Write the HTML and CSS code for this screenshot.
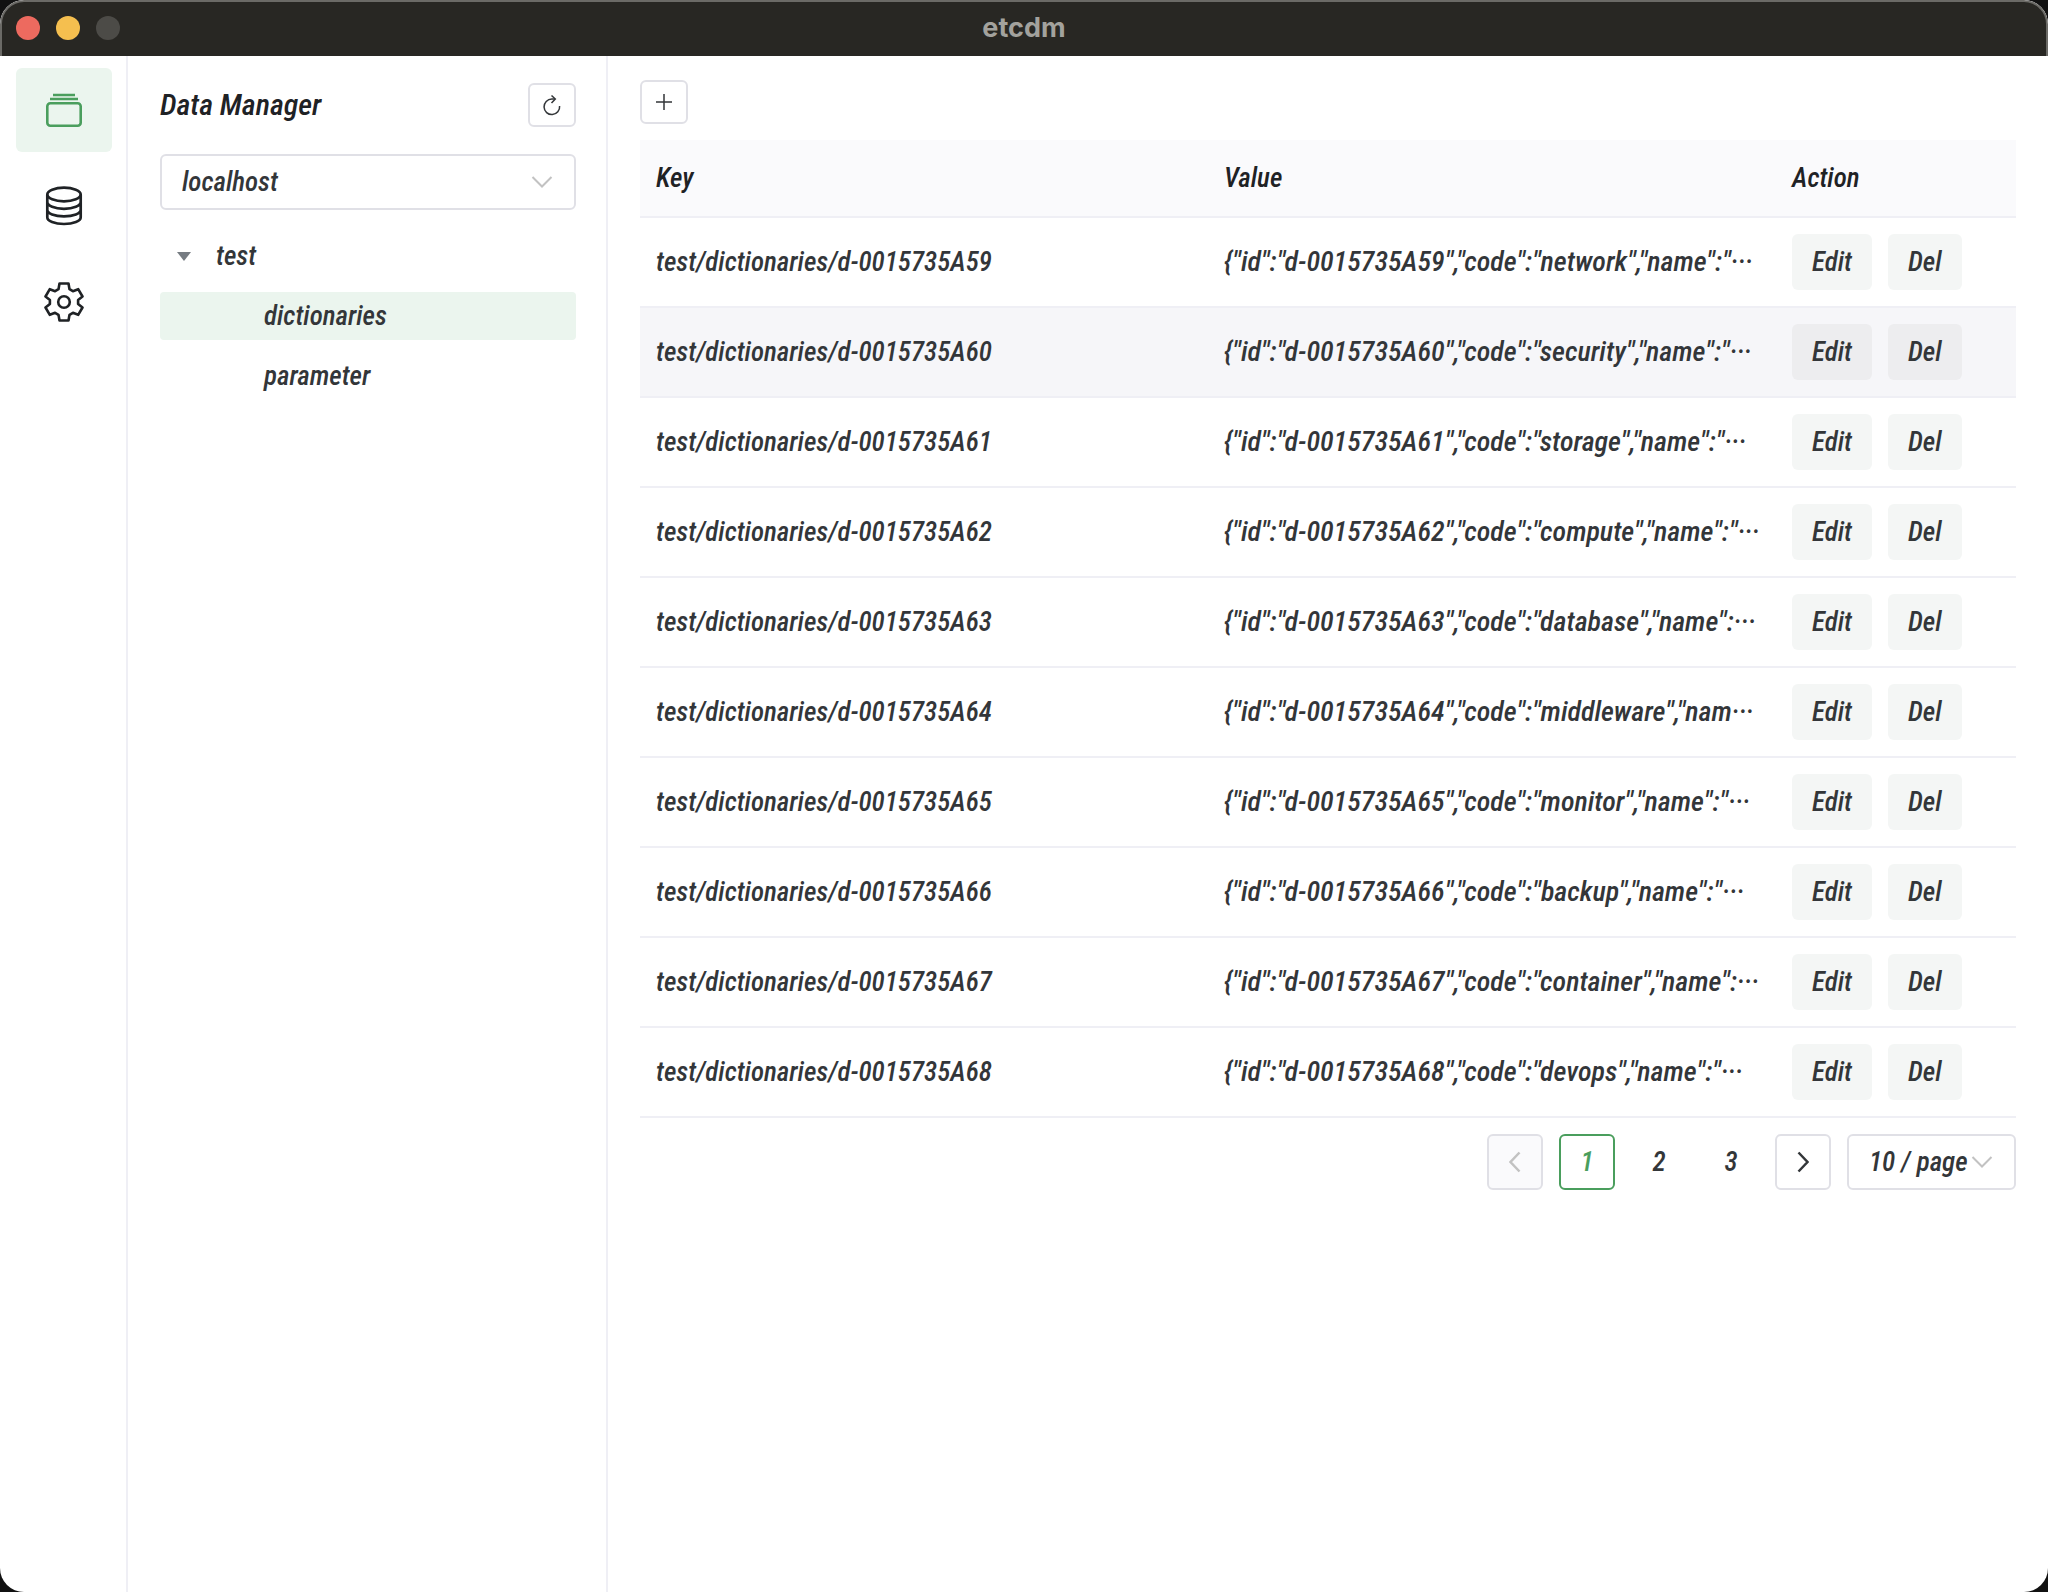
FILE: index.html
```html
<!DOCTYPE html>
<html lang="en">
<head>
<meta charset="utf-8">
<title>etcdm</title>
<link rel="stylesheet" href="styles.css">
</head>
<body>
<div class="window">
  <header class="titlebar">
    <div class="lights">
      <span class="light light-close"></span>
      <span class="light light-min"></span>
      <span class="light light-max"></span>
    </div>
    <span class="app-name">etcdm</span>
  </header>
  <div class="layout">
    <nav class="sidebar" aria-label="Sections">
      <button class="nav-item nav-active" type="button" aria-label="Data">
        <svg width="40" height="40" viewBox="0 0 40 40" fill="none" stroke="currentColor" stroke-width="2.600">
          <path d="M9 5h22M6 9h28" stroke-width="2.500"/>
          <rect x="3.300" y="13.300" width="33.400" height="22.400" rx="3"/>
        </svg>
      </button>
      <button class="nav-item" type="button" aria-label="Connections">
        <svg width="40" height="40" viewBox="0 0 40 40" fill="none" stroke="currentColor" stroke-width="2.700">
          <ellipse cx="20" cy="8.500" rx="16.700" ry="6.800"/>
          <path d="M3.300 8.500V31.500C3.300 35 10.500 38 20 38S36.700 35 36.700 31.500V8.500M3.300 16C3.300 19.800 10.500 22.800 20 22.800S36.700 19.800 36.700 16M3.300 23.700C3.300 27.500 10.500 30.400 20 30.400S36.700 27.500 36.700 23.700"/>
        </svg>
      </button>
      <button class="nav-item" type="button" aria-label="Settings">
        <svg width="40" height="40" viewBox="0 0 40 40" fill="none" stroke="currentColor" stroke-width="2.600" stroke-linejoin="round">
          <circle cx="20" cy="20" r="5.800"/>
          <path d="M15.500 1.500h9l1 5.700 3.400 2 5.300-2L38.500 14.500 34.100 18v4l4.400 3.500-4.300 7.300-5.300-2-3.400 2-1 5.700h-9l-1-5.700-3.400-2-5.300 2L1.500 25.500 5.900 22v-4L1.500 14.500 5.800 7.200l5.300 2 3.400-2z"/>
        </svg>
      </button>
    </nav>
    <aside class="panel">
      <div class="panel-head">
        <h1 class="panel-title">Data Manager</h1>
        <button class="icon-button" type="button" aria-label="Refresh">
          <svg width="20" height="22" viewBox="0 0 20 22" fill="none" stroke="currentColor" stroke-width="1.500">
            <path d="M17.600 12A7.800 7.800 0 1 1 9.800 5H13"/>
            <path d="M9.500 1.500 13.300 5 9.500 9"/>
          </svg>
        </button>
      </div>
      <div class="select">
        <select class="select-field" aria-label="Connection"><option>localhost</option></select>
        <svg class="select-arrow" width="22" height="12" viewBox="0 0 22 12" fill="none" stroke="currentColor" stroke-width="2"><path d="M1.500 1 11 10.500 20.500 1"/></svg>
      </div>
      <ul class="tree">
        <li><button class="node" type="button"><span class="caret"></span>test</button></li>
        <li><button class="node node-child node-selected" type="button">dictionaries</button></li>
        <li><button class="node node-child" type="button">parameter</button></li>
      </ul>
    </aside>
    <main class="content">
      <button class="icon-button" type="button" aria-label="Add">
        <svg width="16" height="16" viewBox="0 0 16 16" stroke="currentColor" stroke-width="1.500"><path d="M8 0v16M0 8h16"/></svg>
      </button>
      <table class="table">
        <colgroup><col><col><col class="col-action"></colgroup>
        <thead>
          <tr><th>Key</th><th>Value</th><th>Action</th></tr>
        </thead>
        <tbody>
          <tr><td>test/dictionaries/d-0015735A59</td><td class="value">{"id":"d-0015735A59","code":"network","name":"···</td><td><div class="actions"><button class="action" type="button">Edit</button><button class="action" type="button">Del</button></div></td></tr>
          <tr class="row-hover"><td>test/dictionaries/d-0015735A60</td><td class="value">{"id":"d-0015735A60","code":"security","name":"···</td><td><div class="actions"><button class="action" type="button">Edit</button><button class="action" type="button">Del</button></div></td></tr>
          <tr><td>test/dictionaries/d-0015735A61</td><td class="value">{"id":"d-0015735A61","code":"storage","name":"···</td><td><div class="actions"><button class="action" type="button">Edit</button><button class="action" type="button">Del</button></div></td></tr>
          <tr><td>test/dictionaries/d-0015735A62</td><td class="value">{"id":"d-0015735A62","code":"compute","name":"···</td><td><div class="actions"><button class="action" type="button">Edit</button><button class="action" type="button">Del</button></div></td></tr>
          <tr><td>test/dictionaries/d-0015735A63</td><td class="value">{"id":"d-0015735A63","code":"database","name":···</td><td><div class="actions"><button class="action" type="button">Edit</button><button class="action" type="button">Del</button></div></td></tr>
          <tr><td>test/dictionaries/d-0015735A64</td><td class="value">{"id":"d-0015735A64","code":"middleware","nam···</td><td><div class="actions"><button class="action" type="button">Edit</button><button class="action" type="button">Del</button></div></td></tr>
          <tr><td>test/dictionaries/d-0015735A65</td><td class="value">{"id":"d-0015735A65","code":"monitor","name":"···</td><td><div class="actions"><button class="action" type="button">Edit</button><button class="action" type="button">Del</button></div></td></tr>
          <tr><td>test/dictionaries/d-0015735A66</td><td class="value">{"id":"d-0015735A66","code":"backup","name":"···</td><td><div class="actions"><button class="action" type="button">Edit</button><button class="action" type="button">Del</button></div></td></tr>
          <tr><td>test/dictionaries/d-0015735A67</td><td class="value">{"id":"d-0015735A67","code":"container","name":···</td><td><div class="actions"><button class="action" type="button">Edit</button><button class="action" type="button">Del</button></div></td></tr>
          <tr><td>test/dictionaries/d-0015735A68</td><td class="value">{"id":"d-0015735A68","code":"devops","name":"···</td><td><div class="actions"><button class="action" type="button">Edit</button><button class="action" type="button">Del</button></div></td></tr>
        </tbody>
      </table>
      <nav class="pager" aria-label="Pages">
        <button class="page page-boxed page-off" type="button" disabled aria-label="Previous page">
          <svg width="12" height="22" viewBox="0 0 12 22" fill="none" stroke="currentColor" stroke-width="2.500"><path d="M10.500 1.500 1.500 11l9 9.500"/></svg>
        </button>
        <button class="page page-boxed page-current" type="button">1</button>
        <button class="page" type="button">2</button>
        <button class="page" type="button">3</button>
        <button class="page page-boxed" type="button" aria-label="Next page">
          <svg width="12" height="22" viewBox="0 0 12 22" fill="none" stroke="currentColor" stroke-width="2.500"><path d="M1.500 1.500l9 9.500-9 9.500"/></svg>
        </button>
        <div class="select page-size">
          <select class="select-field" aria-label="Rows per page"><option>10 / page</option></select>
          <svg class="select-arrow" width="22" height="12" viewBox="0 0 22 12" fill="none" stroke="currentColor" stroke-width="2"><path d="M1.500 1 11 10.500 20.500 1"/></svg>
        </div>
      </nav>
    </main>
  </div>
</div>
</body>
</html>
```
FILE: styles.css
```css
* { box-sizing: border-box; }

body {
  margin: 0;
  background: #111;
  color: #333639;
  font: italic 500 27px/36px "Roboto Condensed", "Open Sans", sans-serif;
}

button, select {
  margin: 0;
  padding: 0;
  border: 0;
  background: none;
  color: inherit;
  font: inherit;
}

.window {
  display: flex;
  flex-direction: column;
  min-height: 100vh;
  overflow: hidden;
  border-radius: 24px;
  background: #fff;
}

.titlebar {
  display: grid;
  grid-template-columns: 1fr auto 1fr;
  align-items: center;
  height: 56px;
  padding: 0 14px 2px;
  border: 2px solid #6b6a66;
  border-bottom: 0;
  border-radius: 24px 24px 0 0;
  background: #282723;
}

.lights { display: flex; gap: 16px; }
.light { width: 24px; height: 24px; border-radius: 50%; }
.light-close { background: #ed6a5f; }
.light-min { background: #f5bf4f; }
.light-max { background: #4c4b47; }

.app-name {
  color: #a3a29d;
  font: normal 700 27px/32px Inter, sans-serif;
}

.layout { display: flex; flex: 1; }

.sidebar {
  display: flex;
  flex-direction: column;
  gap: 12px;
  width: 128px;
  padding: 12px 14px 12px 16px;
  border-right: 2px solid #efeff5;
}

.nav-item {
  display: flex;
  align-items: center;
  justify-content: center;
  width: 96px;
  height: 84px;
  border-radius: 6px;
  color: #1f2225;
}
.nav-active { background: #ebf5ee; color: #4a9e5d; }

.panel {
  width: 480px;
  padding: 27px 30px 24px 32px;
  border-right: 2px solid #efeff5;
}

.panel-head {
  display: flex;
  align-items: center;
  justify-content: space-between;
  margin-bottom: 27px;
}
.panel-title {
  margin: 0;
  color: #1f2225;
  font-size: 30px;
  font-weight: 500;
  line-height: 44px;
}

.icon-button {
  display: flex;
  align-items: center;
  justify-content: center;
  width: 48px;
  height: 44px;
  border: 2px solid #e0e0e6;
  border-radius: 6px;
}

.select { position: relative; }
.select-field {
  display: block;
  width: 100%;
  height: 56px;
  padding: 0 20px;
  border: 2px solid #e0e0e6;
  border-radius: 6px;
  background: #fff;
  appearance: none;
}
.select-arrow {
  position: absolute;
  top: 22px;
  right: 23px;
  color: #c2c2c2;
  pointer-events: none;
}

.tree {
  display: flex;
  flex-direction: column;
  gap: 12px;
  margin: 22px 0 0;
  padding: 0;
  list-style: none;
}
.node {
  display: flex;
  align-items: center;
  gap: 25px;
  width: 100%;
  height: 48px;
  padding: 0 17px;
  border-radius: 4px;
}
.node-child { padding-left: 104px; }
.node-selected { background: #ebf5ee; }
.caret {
  border: 7px solid transparent;
  border-top: 9px solid #767c82;
  border-bottom: 0;
}

.content { flex: 1; padding: 24px 32px; }

.table {
  width: 100%;
  margin-top: 16px;
  border-collapse: separate;
  border-spacing: 0;
  table-layout: fixed;
}
.col-action { width: 240px; }
.table th, .table td {
  padding: 0 16px;
  border-bottom: 2px solid #efeff5;
  text-align: left;
  white-space: nowrap;
}
.table th {
  height: 78px;
  background: #fafafc;
  color: #1f2225;
  font-weight: 500;
}
.table td { height: 90px; }
.table .value { font-size: 28px; }
.row-hover { background: #f6f6f9; }

.actions { display: flex; gap: 16px; }
.action {
  height: 56px;
  padding: 0 20px;
  border-radius: 6px;
  background: #f4f6f5;
}
.row-hover .action { background: #ededef; }

.pager {
  display: flex;
  justify-content: flex-end;
  gap: 16px;
  margin-top: 16px;
}
.page {
  display: flex;
  align-items: center;
  justify-content: center;
  width: 56px;
  height: 56px;
  border-radius: 6px;
}
.page-boxed { border: 2px solid #e0e0e6; }
.page-off { background: #fafafc; color: #c2c2c2; }
.page-current { border-color: #4a9e5d; color: #4a9e5d; }
.page-size { width: 169px; }
```
